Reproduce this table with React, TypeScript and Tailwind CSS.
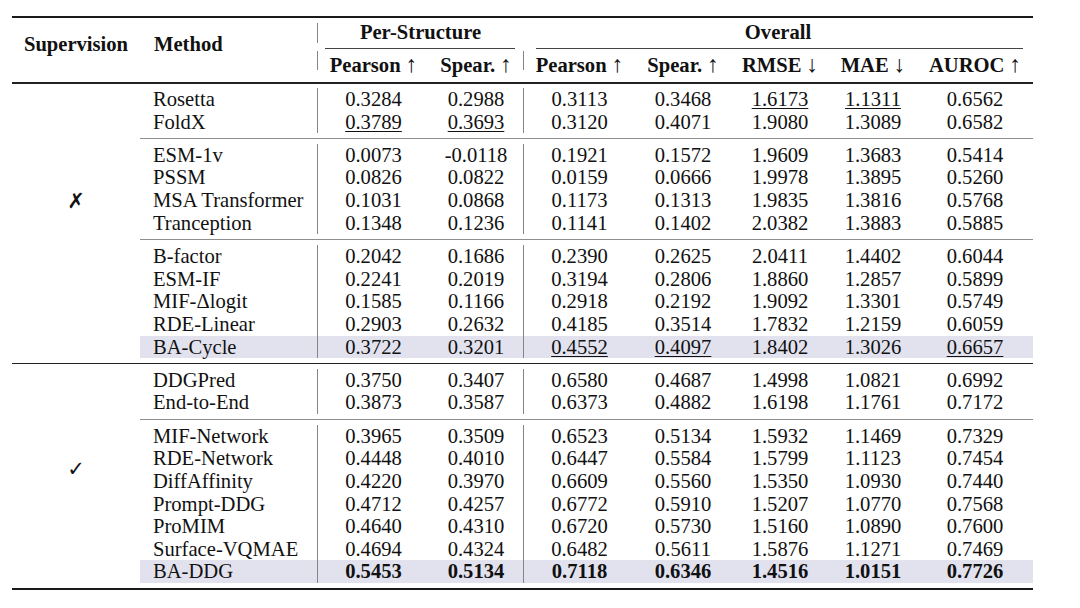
import React from "react";

type Cell = { v: string; u?: boolean; b?: boolean };
type Row = { name: string; vals: Cell[]; hl?: boolean };

const c = (v: string, u = false, b = false): Cell => ({ v, u, b });
const r = (name: string, vals: (string | Cell)[], hl = false): Row => ({
  name,
  vals: vals.map((x) => (typeof x === "string" ? c(x) : x)),
  hl,
});

const block1: Row[][] = [
  [
    r("Rosetta", ["0.3284", "0.2988", "0.3113", "0.3468", c("1.6173", true), c("1.1311", true), "0.6562"]),
    r("FoldX", [c("0.3789", true), c("0.3693", true), "0.3120", "0.4071", "1.9080", "1.3089", "0.6582"]),
  ],
  [
    r("ESM-1v", ["0.0073", "-0.0118", "0.1921", "0.1572", "1.9609", "1.3683", "0.5414"]),
    r("PSSM", ["0.0826", "0.0822", "0.0159", "0.0666", "1.9978", "1.3895", "0.5260"]),
    r("MSA Transformer", ["0.1031", "0.0868", "0.1173", "0.1313", "1.9835", "1.3816", "0.5768"]),
    r("Tranception", ["0.1348", "0.1236", "0.1141", "0.1402", "2.0382", "1.3883", "0.5885"]),
  ],
  [
    r("B-factor", ["0.2042", "0.1686", "0.2390", "0.2625", "2.0411", "1.4402", "0.6044"]),
    r("ESM-IF", ["0.2241", "0.2019", "0.3194", "0.2806", "1.8860", "1.2857", "0.5899"]),
    r("MIF-\u0394logit", ["0.1585", "0.1166", "0.2918", "0.2192", "1.9092", "1.3301", "0.5749"]),
    r("RDE-Linear", ["0.2903", "0.2632", "0.4185", "0.3514", "1.7832", "1.2159", "0.6059"]),
    r(
      "BA-Cycle",
      ["0.3722", "0.3201", c("0.4552", true), c("0.4097", true), "1.8402", "1.3026", c("0.6657", true)],
      true
    ),
  ],
];

const block2: Row[][] = [
  [
    r("DDGPred", ["0.3750", "0.3407", "0.6580", "0.4687", "1.4998", "1.0821", "0.6992"]),
    r("End-to-End", ["0.3873", "0.3587", "0.6373", "0.4882", "1.6198", "1.1761", "0.7172"]),
  ],
  [
    r("MIF-Network", ["0.3965", "0.3509", "0.6523", "0.5134", "1.5932", "1.1469", "0.7329"]),
    r("RDE-Network", ["0.4448", "0.4010", "0.6447", "0.5584", "1.5799", "1.1123", "0.7454"]),
    r("DiffAffinity", ["0.4220", "0.3970", "0.6609", "0.5560", "1.5350", "1.0930", "0.7440"]),
    r("Prompt-DDG", ["0.4712", "0.4257", "0.6772", "0.5910", "1.5207", "1.0770", "0.7568"]),
    r("ProMIM", ["0.4640", "0.4310", "0.6720", "0.5730", "1.5160", "1.0890", "0.7600"]),
    r("Surface-VQMAE", ["0.4694", "0.4324", "0.6482", "0.5611", "1.5876", "1.1271", "0.7469"]),
    r(
      "BA-DDG",
      [
        c("0.5453", false, true),
        c("0.5134", false, true),
        c("0.7118", false, true),
        c("0.6346", false, true),
        c("1.4516", false, true),
        c("1.0151", false, true),
        c("0.7726", false, true),
      ],
      true
    ),
  ],
];

const colW = ["w-[112px]", "w-[94px]", "w-[112px]", "w-[96px]", "w-[98px]", "w-[88px]", "w-[116px]"];

function DataRow({ row }: { row: Row }) {
  return (
    <div className={`flex h-[22.67px] items-center ${row.hl ? "bg-[#e2e2ef]" : ""}`}>
      <div className="w-[177px] pl-[13px] whitespace-nowrap">{row.name}</div>
      {row.vals.map((cell, i) => (
        <div
          key={i}
          className={`${colW[i]} h-full flex items-center justify-center ${
            i === 0 || i === 2 ? "border-l border-[#858585]" : ""
          }`}
        >
          <span
            className={`${cell.u ? "underline decoration-1 underline-offset-[2px]" : ""} ${
              cell.b ? "font-bold" : ""
            }`}
          >
            {cell.v}
          </span>
        </div>
      ))}
    </div>
  );
}

function Group({ rows }: { rows: Row[] }) {
  return (
    <div className="py-[4.5px]">
      {rows.map((row) => (
        <DataRow key={row.name} row={row} />
      ))}
    </div>
  );
}

function Block({ groups, mark, markPt }: { groups: Row[][]; mark: string; markPt: string }) {
  return (
    <div className="flex">
      <div className={`w-[128px] flex justify-center ${markPt}`}>
        <div className="h-[24px] leading-[24px] text-[21px] [font-family:'DejaVu_Sans',sans-serif]">{mark}</div>
      </div>
      <div className="w-[893px] flex flex-col">
        {groups.map((g, i) => (
          <React.Fragment key={i}>
            {i > 0 && <div className="h-[1.5px] bg-[#8e8e8e]" />}
            <Group rows={g} />
          </React.Fragment>
        ))}
      </div>
    </div>
  );
}

function Arrow({ d }: { d: string }) {
  return <span className="font-normal text-[23px] leading-[20px]">{d}</span>;
}

export default function App() {
  return (
    <div className="w-[1080px] h-[608px] bg-white text-[#111] text-[20.6px] leading-[22.67px] [font-family:'Liberation_Serif','Times_New_Roman',serif] pl-[12px] pt-[16px]">
      <div className="w-[1021px]">
        <div className="h-[2px] bg-[#1a1a1a]" />
        {/* Header */}
        <div className="flex h-[64px] font-bold">
          <div className="w-[128px] flex justify-center pt-[15px]">Supervision</div>
          <div className="w-[177px] pl-[14px] pt-[15px]">Method</div>
          <div className="w-[716px] flex flex-col">
            <div className="flex h-[30px]">
              <div className="w-[206px] flex">
                <div className="w-px h-[20px] mt-[5px] bg-[#858585]" />
                <div className="flex-1 flex justify-center pt-[3px]">Per-Structure</div>
              </div>
              <div className="w-[510px] flex justify-center pt-[3px]">Overall</div>
            </div>
            <div className="flex h-px">
              <div className="w-[206px] pl-[8px] pr-[8px]">
                <div className="h-px bg-[#444]" />
              </div>
              <div className="w-[510px] pl-[13px] pr-[10px]">
                <div className="h-px bg-[#444]" />
              </div>
            </div>
            <div className="flex h-[33px]">
              {[
                ["Pearson", "\u2191"],
                ["Spear.", "\u2191"],
                ["Pearson", "\u2191"],
                ["Spear.", "\u2191"],
                ["RMSE", "\u2193"],
                ["MAE", "\u2193"],
                ["AUROC", "\u2191"],
              ].map(([t, a], i) => (
                <div key={i} className={`${colW[i]} flex`}>
                  {(i === 0 || i === 2) && <div className="w-px h-[19px] mt-[2px] bg-[#858585]" />}
                  <div className="flex-1 flex justify-center items-baseline pt-[5px] whitespace-nowrap">
                    <span>{t}&nbsp;</span>
                    <Arrow d={a} />
                  </div>
                </div>
              ))}
            </div>
          </div>
        </div>
        <div className="h-[1.5px] bg-[#222]" />
        <Block groups={block1} mark={"\u2717"} markPt="pt-[105px]" />
        <div className="h-[1.5px] bg-[#222]" />
        <Block groups={block2} mark={"\u2713"} markPt="pt-[93px]" />
        <div className="h-[2px] bg-[#1a1a1a]" />
      </div>
    </div>
  );
}
